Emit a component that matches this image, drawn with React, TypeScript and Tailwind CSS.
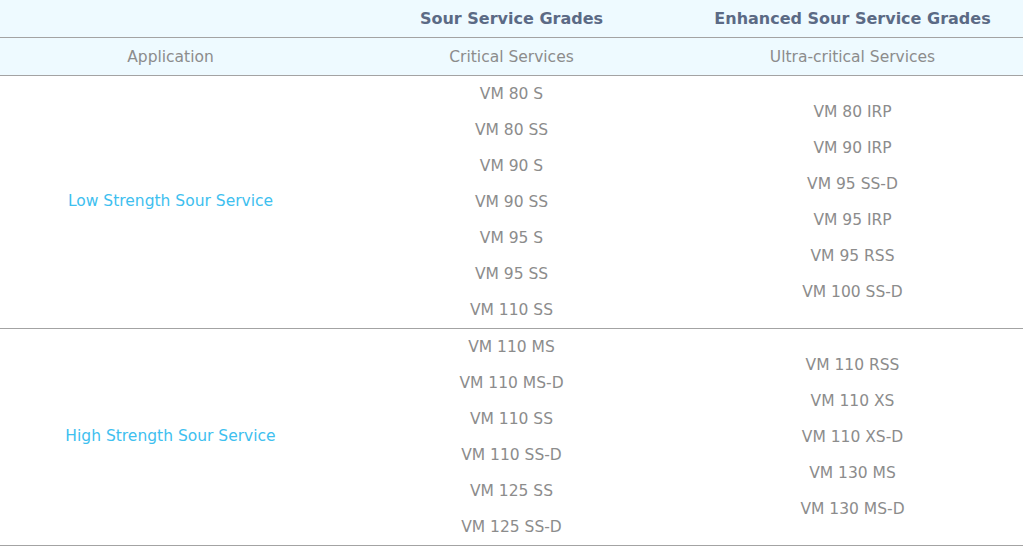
const low = {
  sour: ["VM 80 S", "VM 80 SS", "VM 90 S", "VM 90 SS", "VM 95 S", "VM 95 SS", "VM 110 SS"],
  enhanced: ["VM 80 IRP", "VM 90 IRP", "VM 95 SS-D", "VM 95 IRP", "VM 95 RSS", "VM 100 SS-D"],
};

const high = {
  sour: ["VM 110 MS", "VM 110 MS-D", "VM 110 SS", "VM 110 SS-D", "VM 125 SS", "VM 125 SS-D"],
  enhanced: ["VM 110 RSS", "VM 110 XS", "VM 110 XS-D", "VM 130 MS", "VM 130 MS-D"],
};

function GradeList({ items }: { items: string[] }) {
  return (
    <div className="flex flex-col items-center justify-center">
      {items.map((g) => (
        <div key={g} className="h-9 leading-9">
          {g}
        </div>
      ))}
    </div>
  );
}

function Section({ title, data }: { title: string; data: { sour: string[]; enhanced: string[] } }) {
  return (
    <div className="grid grid-cols-3 border-b border-[#a3a3a3] text-[#8c8c8c]">
      <div className="flex items-center justify-center text-[#3ec0ef]">{title}</div>
      <GradeList items={data.sour} />
      <GradeList items={data.enhanced} />
    </div>
  );
}

export default function App() {
  return (
    <div className="w-[1023px] bg-white text-center text-[15.5px] font-['DejaVu_Sans',sans-serif]">
      <div className="grid h-[38px] grid-cols-3 items-center border-b border-[#a3a3a3] bg-[#eefaff] text-[16px] font-bold text-[#5b6a85]">
        <div />
        <div>Sour Service Grades</div>
        <div>Enhanced Sour Service Grades</div>
      </div>
      <div className="grid h-[38px] grid-cols-3 items-center border-b border-[#a3a3a3] bg-[#eefaff] pt-0.5 text-[#8c8c8c]">
        <div>Application</div>
        <div>Critical Services</div>
        <div>Ultra-critical Services</div>
      </div>
      <Section title="Low Strength Sour Service" data={low} />
      <Section title="High Strength Sour Service" data={high} />
    </div>
  );
}
